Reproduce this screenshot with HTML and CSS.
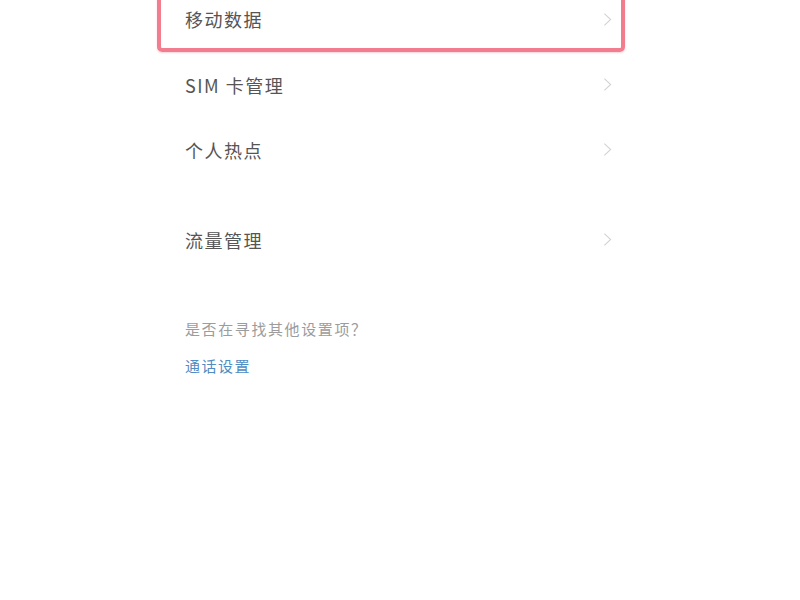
FILE: index.html
```html
<!DOCTYPE html>
<html lang="zh">
<head>
<meta charset="utf-8">
<link rel="stylesheet" href="styles.css">
</head>
<body>
<div class="page">
  <ul class="list">
    <li class="row row-active"><span class="label">移动数据</span><svg class="chev" viewBox="0 0 10 16"><path d="M1.5 1.5 L8.5 8 L1.5 14.5"/></svg></li>
    <li class="row"><span class="label">SIM 卡管理</span><svg class="chev" viewBox="0 0 10 16"><path d="M1.5 1.5 L8.5 8 L1.5 14.5"/></svg></li>
    <li class="row"><span class="label">个人热点</span><svg class="chev" viewBox="0 0 10 16"><path d="M1.5 1.5 L8.5 8 L1.5 14.5"/></svg></li>
  </ul>
  <ul class="list list-second">
    <li class="row"><span class="label">流量管理</span><svg class="chev" viewBox="0 0 10 16"><path d="M1.5 1.5 L8.5 8 L1.5 14.5"/></svg></li>
  </ul>
  <div class="hint">
    <p class="hint-text">是否在寻找其他设置项？</p>
    <a class="hint-link">通话设置</a>
  </div>
</div>
</body>
</html>
```
FILE: styles.css
```css
html, body {
  margin: 0;
  padding: 0;
  background: #ffffff;
}
body {
  width: 800px;
  height: 600px;
  overflow: hidden;
  font-family: "Noto Sans CJK SC", "Noto Sans", sans-serif;
}
.page {
  width: 468px;
  margin-left: 157px;
  margin-top: -14px;
}
.list {
  list-style: none;
  margin: 0;
  padding: 0;
}
.list-second {
  margin-top: 25px;
}
.row {
  height: 65px;
  display: flex;
  align-items: center;
  justify-content: space-between;
  padding: 0 13px 0 28px;
  box-sizing: border-box;
}
.row-active {
  height: 66px;
  border: 4px solid #f27d8f;
  border-radius: 5px;
  padding: 0 9px 0 24px;
  box-shadow: 0 1px 2px rgba(240, 120, 140, 0.35);
}
.label {
  font-size: 18px;
  color: #555555;
  letter-spacing: 1.5px;
}
.chev {
  width: 9px;
  height: 15px;
  fill: none;
  stroke: #d2d2d2;
  stroke-width: 1.2;
}
.hint {
  padding-left: 28px;
  margin-top: 46px;
}
.hint-text {
  margin: 0;
  font-size: 15px;
  line-height: 22px;
  color: #9c9c9c;
  letter-spacing: 1.6px;
}
.hint-link {
  display: block;
  margin-top: 15px;
  font-size: 15px;
  line-height: 22px;
  color: #4f8cc2;
  letter-spacing: 1.5px;
}
```
